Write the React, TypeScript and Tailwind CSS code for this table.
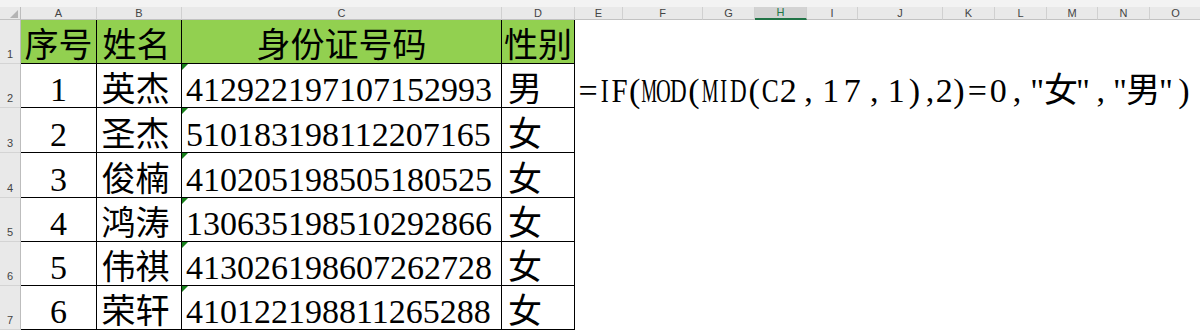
import type { ReactNode } from 'react';

const cols = ['A', 'B', 'C', 'D', 'E', 'F', 'G', 'H', 'I', 'J', 'K', 'L', 'M', 'N', 'O'];

const rows = [
    ['1', '英杰', '412922197107152993', '男'],
    ['2', '圣杰', '510183198112207165', '女'],
    ['3', '俊楠', '410205198505180525', '女'],
    ['4', '鸿涛', '130635198510292866', '女'],
    ['5', '伟祺', '413026198607262728', '女'],
    ['6', '荣轩', '410122198811265288', '女'],
];

// each glyph of the formula sits in its own cell, widths read off the screenshot
const formula: [string, string, string?][] = [
    ['=', 'w-[17px]'],
    ['I', 'w-[15.75px]', 'scale-x-[0.7]'],
    ['F', 'w-[15px]', 'scale-x-[0.85]'],
    ['(', 'w-[15px]'],
    ['M', 'w-[14.25px]', 'scale-x-[0.52]'],
    ['O', 'w-[14px]', 'scale-x-[0.6]'],
    ['D', 'w-[15.25px]', 'scale-x-[0.68]'],
    ['(', 'w-[16.25px]'],
    ['M', 'w-[15.25px]', 'scale-x-[0.55]'],
    ['I', 'w-[13.75px]', 'scale-x-[0.6]'],
    ['D', 'w-[15.25px]', 'scale-x-[0.68]'],
    ['(', 'w-[16px]'],
    ['C', 'w-[16.75px]', 'scale-x-[0.75]'],
    ['2', 'w-[18.5px]'],
    [',', 'w-[22px]'],
    ['1', 'w-[22.5px]'],
    ['7', 'w-[20.5px]'],
    [',', 'w-[23.25px]'],
    ['1', 'w-[20.75px]'],
    [')', 'w-[16px]'],
    [',', 'w-[14.75px]'],
    ['2', 'w-[13.75px]'],
    [')', 'w-[15.75px]'],
    ['=', 'w-[21.25px]'],
    ['0', 'w-[20.25px]'],
    [',', 'w-[17.5px]'],
    ['"', 'w-[22.75px]'],
    ['女', 'w-[25px]'],
    ['"', 'w-[19px]'],
    [',', 'w-[16.5px]'],
    ['"', 'w-[21.75px]'],
    ['男', 'w-[25px]'],
    ['"', 'w-[20.25px]'],
    [')', 'w-[16px]'],
];

const serif = "font-['Liberation_Serif','Noto_Sans_CJK_SC',serif] text-[34px] leading-[34px] text-black";

function ColHeader({ label }: { label: string }) {
    const active = label === 'H';
    return (
        <div
            className={`flex items-end justify-center border-r border-[#d0d0d0] font-['Liberation_Sans',sans-serif] text-[11px] leading-[11px] ${active
                ? 'bg-[#d3d3d3] text-[#217346] border-b-2 border-b-[#217346]'
                : 'bg-[#e9e9e9] text-[#444444] border-b border-b-[#c2c2c2]'
                }`}
        >
            {label}
        </div>
    );
}

function RowHeader({ n }: { n: number }) {
    return (
        <div className="flex items-end justify-center pb-[3px] bg-[#e9e9e9] border-r border-r-[#bdbdbd] border-b border-b-[#d4d4d4] font-['Liberation_Sans',sans-serif] text-[11px] leading-[11px] text-[#444444]">
            {n}
        </div>
    );
}

function Cell({ className = '', children }: { className?: string; children?: ReactNode }) {
    return <div className={`relative flex items-end border-r border-b border-black ${serif} ${className}`}>{children}</div>;
}

function Formula() {
    return (
        <div className={`flex items-end shrink-0 whitespace-nowrap pl-[4.5px] ${serif}`}>
            {formula.map(([ch, w, sx], i) => (
                <span key={i} className={`flex justify-center shrink-0 ${w}`}>
                    <span className={`inline-block ${sx ?? ''}`}>{ch}</span>
                </span>
            ))}
        </div>
    );
}

export default function App() {
    return (
        <div className="w-[1200px] h-[330px] overflow-hidden bg-white">
            <div className="h-[7px] bg-[#f3f3f3]" />
            <div className="grid grid-cols-[21px_76px_85px_320px_73px_48px_80px_52px_52px_51px_85px_52px_52px_51px_52px_52px] grid-rows-[13px_44px_44px_45px_45px_44px_44px_44px]">
                {/* corner */}
                <div className="flex items-end justify-end pr-[2px] pb-[1px] bg-[#e9e9e9] border-r border-r-[#bdbdbd] border-b border-b-[#c2c2c2]">
                    <svg width="8" height="8" viewBox="0 0 8 8">
                        <polygon points="8,0 8,8 0,8" fill="#b4b4b4" />
                    </svg>
                </div>
                {cols.map((c) => (
                    <ColHeader key={c} label={c} />
                ))}

                {/* row 1: titles */}
                <RowHeader n={1} />
                <Cell className="justify-center bg-[#92d050]">序号</Cell>
                <Cell className="justify-center pr-[5px] bg-[#92d050]">姓名</Cell>
                <Cell className="justify-center bg-[#92d050]">身份证号码</Cell>
                <Cell className="justify-center bg-[#92d050]">性别</Cell>
                {cols.slice(4).map((c) => (
                    <div key={c} />
                ))}

                {rows.map((r, i) => (
                    <div key={r[0]} className="contents">
                        <RowHeader n={i + 2} />
                        <Cell className="justify-center">{r[0]}</Cell>
                        <Cell className="justify-center pr-[7px]">{r[1]}</Cell>
                        <Cell className="pl-[4px]">
                            <svg className="absolute left-0 top-0" width="6" height="6" viewBox="0 0 6 6">
                                <polygon points="0,0 6,0 0,6" fill="#16801a" />
                            </svg>
                            {r[2]}
                        </Cell>
                        <Cell className="pl-[6px]">{r[3]}</Cell>
                        <div className="relative z-10 flex items-end overflow-visible">{i === 0 && <Formula />}</div>
                        {cols.slice(5).map((c) => (
                            <div key={c} />
                        ))}
                    </div>
                ))}
            </div>
        </div>
    );
}
